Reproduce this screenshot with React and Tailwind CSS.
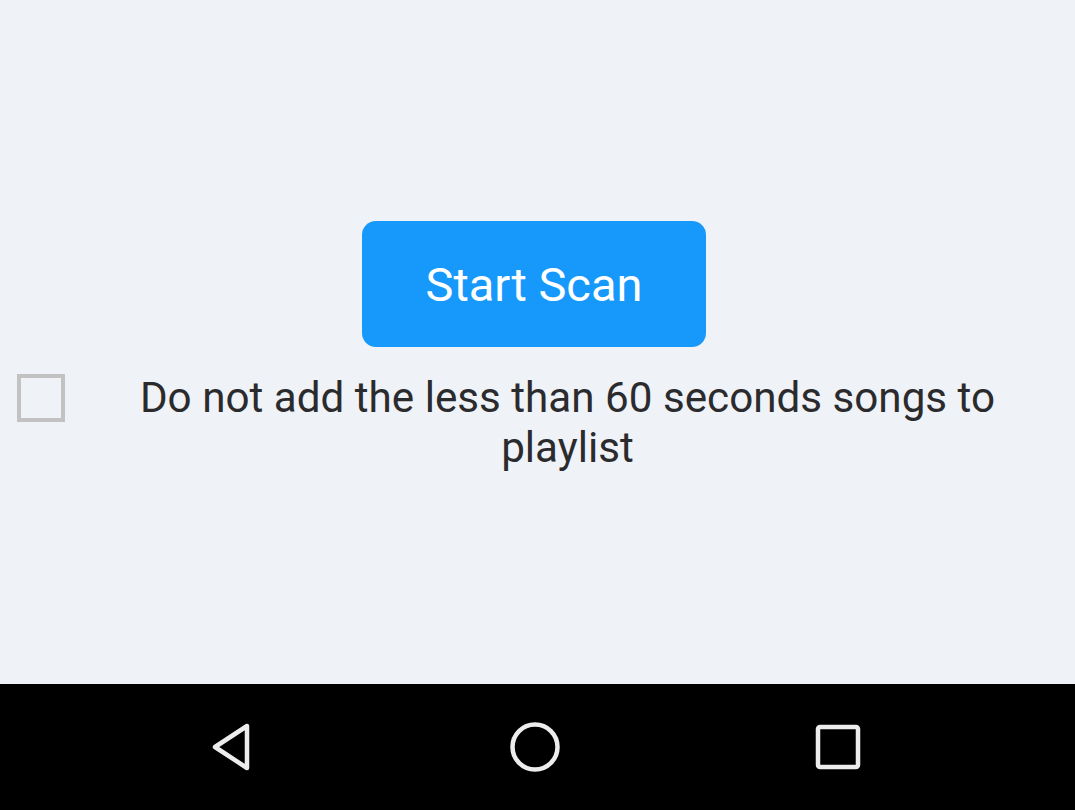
import React, { useState } from 'react';

const NavBar = () => (
  <div className="h-[126px] bg-black flex items-center">
    <div className="w-[464px] flex justify-center">
      <svg width="50" height="50" viewBox="0 0 50 50">
        <path d="M40 4 L40 46 L8 25 Z" fill="none" stroke="#ededed" strokeWidth="4.5" strokeLinejoin="round" />
      </svg>
    </div>
    <div className="w-[142px] flex justify-center">
      <svg width="52" height="52" viewBox="0 0 52 52">
        <circle cx="26" cy="26" r="22.5" fill="none" stroke="#ededed" strokeWidth="4.5" />
      </svg>
    </div>
    <div className="w-[464px] flex justify-center">
      <svg width="46" height="46" viewBox="0 0 46 46">
        <rect x="3" y="3" width="40" height="40" rx="2" fill="none" stroke="#ededed" strokeWidth="4.5" />
      </svg>
    </div>
  </div>
);

const App = () => {
  const [checked, setChecked] = useState(false);

  return (
    <div className="w-[1075px] h-[810px] flex flex-col bg-[#eff2f6]" style={{ fontFamily: 'Roboto, "Noto Sans", sans-serif' }}>
      <div className="h-[684px] flex flex-col items-center pt-[221px]">
        <button className="w-[344px] h-[126px] mr-[7px] rounded-[14px] bg-[#1699fb] text-white text-[47px] leading-none">
          Start Scan
        </button>

        <div className="w-full flex items-start mt-[26px]">
          <button
            onClick={() => setChecked(!checked)}
            className="ml-[17px] mt-[1px] w-[48px] h-[48px] border-[4px] border-[#c2c2c2] shrink-0"
          />
          <p className="flex-1 pl-[35px] pr-[40px] text-center text-[#2b2b2e] text-[42.2px] leading-[50px]">
            Do not add the less than 60 seconds songs to playlist
          </p>
        </div>
      </div>
      <NavBar />
    </div>
  );
};

export default App;
